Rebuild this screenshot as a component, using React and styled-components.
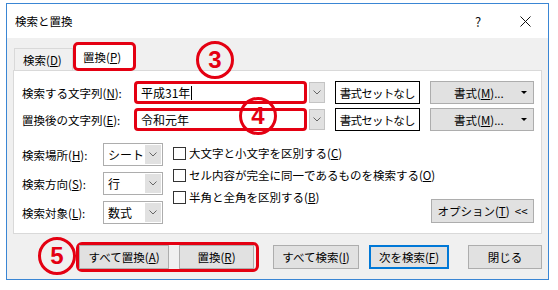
import React from "react";
import styled, { createGlobalStyle } from "styled-components";

const GlobalStyle = createGlobalStyle`
  body {
    margin: 0;
    background: #ffffff;
    font-family: "Noto Sans CJK JP", "Noto Sans", sans-serif;
    font-size: 11.5px;
    color: #000000;
  }
`;

const RED = "#e40012";

const Page = styled.div`
  padding: 3px 0 0 6px;
`;

const Window = styled.div`
  position: relative;
  box-sizing: border-box;
  width: 543px;
  height: 277px;
  border: 1px solid #3a86d4;
  display: flex;
  flex-direction: column;
  background: #f0f0f0;
`;

const TitleBar = styled.div`
  height: 34px;
  display: flex;
  align-items: center;
  background: #ffffff;
  padding-left: 8px;
`;

const Title = styled.span`
  flex: 1;
`;

const TitleAction = styled.span`
  width: ${(p) => p.$w}px;
  display: flex;
  justify-content: center;
  align-items: center;
  font-size: 13px;
  color: #111;
`;

const Body = styled.div`
  flex: 1;
  padding: 4px 6px 0 6px;
  display: flex;
  flex-direction: column;
`;

const TabStrip = styled.div`
  height: 28px;
  display: flex;
  align-items: flex-end;
  padding-left: 1px;
`;

const Tab = styled.div`
  box-sizing: border-box;
  height: 22px;
  width: 59px;
  border: 1px solid #d9d9d9;
  border-bottom: none;
  padding-left: 8px;
  display: flex;
  align-items: center;
`;

const ActiveTab = styled.div`
  position: relative;
  z-index: 1;
  box-sizing: border-box;
  height: 29px;
  width: 63px;
  margin-bottom: -1px;
  border: 3px solid ${RED};
  border-radius: 5px;
  background: #ffffff;
  padding-left: 7px;
  display: flex;
  align-items: center;
`;

const Panel = styled.div`
  background: #ffffff;
  border: 1px solid #d9d9d9;
  padding: 10px 7px 9px 8px;
  display: flex;
  flex-direction: column;
`;

const FieldRows = styled.div`
  display: flex;
  flex-direction: column;
  gap: 4px;
`;

const FieldRow = styled.div`
  display: flex;
  align-items: center;
  height: 23px;
`;

const Label = styled.span`
  width: ${(p) => p.$w}px;
  flex-shrink: 0;
  white-space: nowrap;
`;

const TextBox = styled.div`
  box-sizing: border-box;
  width: 174px;
  height: 23px;
  border: 3px solid ${RED};
  border-radius: 4px;
  background: #ffffff;
  padding-left: 4px;
  display: flex;
  align-items: center;
  white-space: nowrap;
  font-size: 12px;
`;

const Caret = styled.span`
  display: inline-block;
  width: 1px;
  height: 14px;
  background: #000;
  margin-left: 1px;
`;

const DropButton = styled.div`
  box-sizing: border-box;
  width: 16px;
  height: 21px;
  margin-left: 2px;
  background: #e1e1e1;
  border: 1px solid #c4c4c4;
  display: flex;
  align-items: center;
  justify-content: center;
`;

const FormatClearButton = styled.div`
  box-sizing: border-box;
  width: 86px;
  height: 23px;
  margin-left: 10px;
  border: 1px solid #000000;
  background: #ffffff;
  display: flex;
  align-items: center;
  justify-content: center;
  white-space: nowrap;
  letter-spacing: -0.8px;
`;

const Button = styled.div`
  box-sizing: border-box;
  width: ${(p) => p.$w}px;
  height: ${(p) => p.$h || 24}px;
  margin-left: ${(p) => p.$ml || 0}px;
  background: #e1e1e1;
  border: ${(p) => (p.$default ? "2px solid #0078d7" : "1px solid #adadad")};
  display: flex;
  align-items: center;
  justify-content: center;
  white-space: nowrap;
  flex-shrink: 0;
`;

const SplitButton = styled(Button)`
  justify-content: flex-start;
  padding-left: 23px;
  position: relative;
`;

const SplitArrow = styled.span`
  position: absolute;
  right: 6px;
  top: 9px;
  width: 0;
  height: 0;
  border-left: 3px solid transparent;
  border-right: 3px solid transparent;
  border-top: 3px solid #000;
`;

const OptionsArea = styled.div`
  display: flex;
  margin-top: 12px;
`;

const ScopeColumn = styled.div`
  display: flex;
  flex-direction: column;
  gap: 6px;
  flex-shrink: 0;
`;

const ScopeRow = styled.div`
  display: flex;
  align-items: center;
  height: 23px;
`;

const Select = styled.div`
  box-sizing: border-box;
  width: 60px;
  height: 23px;
  border: 1px solid #adadad;
  background: #ffffff;
  display: flex;
  align-items: stretch;
`;

const SelectValue = styled.span`
  flex: 1;
  padding-left: 4px;
  display: flex;
  align-items: center;
  font-size: 12px;
`;

const SelectDrop = styled.span`
  width: 16px;
  margin: 1px;
  background: #e1e1e1;
  display: flex;
  align-items: center;
  justify-content: center;
`;

const CheckColumn = styled.div`
  flex: 1;
  min-width: 0;
  display: flex;
  flex-direction: column;
  gap: 2px;
  margin-left: 10px;
`;

const CheckRow = styled.label`
  display: flex;
  align-items: center;
  height: 20px;
  white-space: nowrap;
`;

const CheckBox = styled.span`
  box-sizing: border-box;
  flex-shrink: 0;
  width: 13px;
  height: 13px;
  border: 1px solid #333333;
  background: #ffffff;
  margin-right: 3px;
`;

const OptionButtonWrap = styled.div`
  flex-shrink: 0;
  align-self: flex-end;
  margin-bottom: 1px;
`;

const ButtonBar = styled.div`
  display: flex;
  justify-content: flex-end;
  align-items: center;
  margin-top: 8px;
`;

const MarkedGroup = styled.div`
  display: flex;
  gap: 10px;
  border: 3px solid ${RED};
  border-radius: 6px;
  padding-right: 2px;
`;

const Badge = styled.div`
  position: absolute;
  left: ${(p) => p.$x - 26}px;
  top: ${(p) => p.$y - 23}px;
  box-sizing: border-box;
  width: 38px;
  height: 38px;
  border: 3px solid ${RED};
  border-radius: 50%;
  display: flex;
  align-items: center;
  justify-content: center;
  color: ${RED};
  font-family: "Liberation Sans", Arial, sans-serif;
  font-weight: bold;
  font-size: 24px;
  z-index: 2;
`;

const Chevron = () => (
  <svg width="8" height="5" viewBox="0 0 8 5">
    <path d="M0.5 0.5 L4 4 L7.5 0.5" fill="none" stroke="#666" strokeWidth="1" />
  </svg>
);

const CloseIcon = () => (
  <svg width="11" height="11" viewBox="0 0 11 11">
    <path d="M0.5 0.5 L10.5 10.5 M10.5 0.5 L0.5 10.5" stroke="#111" strokeWidth="1" />
  </svg>
);

const Key = ({ k }) => (
  <>
    (<u>{k}</u>)
  </>
);

const fields = [
  { label: "検索する文字列", key: "N", value: "平成31年", caret: true },
  { label: "置換後の文字列", key: "E", value: "令和元年" },
];

const scopes = [
  { label: "検索場所", key: "H", value: "シート" },
  { label: "検索方向", key: "S", value: "行" },
  { label: "検索対象", key: "L", value: "数式" },
];

const checks = [
  { text: "大文字と小文字を区別する", key: "C" },
  { text: "セル内容が完全に同一であるものを検索する", key: "O" },
  { text: "半角と全角を区別する", key: "B" },
];

export default function App() {
  return (
    <Page>
      <GlobalStyle />
      <Window>
        <TitleBar>
          <Title>検索と置換</Title>
          <TitleAction $w={48}>?</TitleAction>
          <TitleAction $w={46}>
            <CloseIcon />
          </TitleAction>
        </TitleBar>
        <Body>
          <TabStrip>
            <Tab>
              検索<Key k="D" />
            </Tab>
            <ActiveTab>
              置換<Key k="P" />
            </ActiveTab>
          </TabStrip>
          <Panel>
            <FieldRows>
              {fields.map((f) => (
                <FieldRow key={f.key}>
                  <Label $w={112}>
                    {f.label}
                    <Key k={f.key} />:
                  </Label>
                  <TextBox>
                    {f.value}
                    {f.caret && <Caret />}
                  </TextBox>
                  <DropButton>
                    <Chevron />
                  </DropButton>
                  <FormatClearButton>書式セットなし</FormatClearButton>
                  <SplitButton $w={104} $h={23} $ml={10}>
                    書式<Key k="M" />...
                    <SplitArrow />
                  </SplitButton>
                </FieldRow>
              ))}
            </FieldRows>
            <OptionsArea>
              <ScopeColumn>
                {scopes.map((s) => (
                  <ScopeRow key={s.key}>
                    <Label $w={81}>
                      {s.label}
                      <Key k={s.key} />:
                    </Label>
                    <Select>
                      <SelectValue>{s.value}</SelectValue>
                      <SelectDrop>
                        <Chevron />
                      </SelectDrop>
                    </Select>
                  </ScopeRow>
                ))}
              </ScopeColumn>
              <CheckColumn>
                {checks.map((c) => (
                  <CheckRow key={c.key}>
                    <CheckBox />
                    {c.text}
                    <Key k={c.key} />
                  </CheckRow>
                ))}
              </CheckColumn>
              <OptionButtonWrap>
                <Button $w={103}>
                  オプション<Key k="T" />&nbsp;&nbsp;&lt;&lt;
                </Button>
              </OptionButtonWrap>
            </OptionsArea>
          </Panel>
          <ButtonBar>
            <MarkedGroup>
              <Button $w={90}>
                すべて置換<Key k="A" />
              </Button>
              <Button $w={75}>
                置換<Key k="R" />
              </Button>
            </MarkedGroup>
            <Button $w={86} $ml={14}>
              すべて検索<Key k="I" />
            </Button>
            <Button $w={80} $ml={10} $default>
              次を検索<Key k="F" />
            </Button>
            <Button $w={74} $ml={19}>
              閉じる
            </Button>
          </ButtonBar>
        </Body>
        <Badge $x={215} $y={60}>3</Badge>
        <Badge $x={258} $y={116}>4</Badge>
        <Badge $x={57} $y={256}>5</Badge>
      </Window>
    </Page>
  );
}
